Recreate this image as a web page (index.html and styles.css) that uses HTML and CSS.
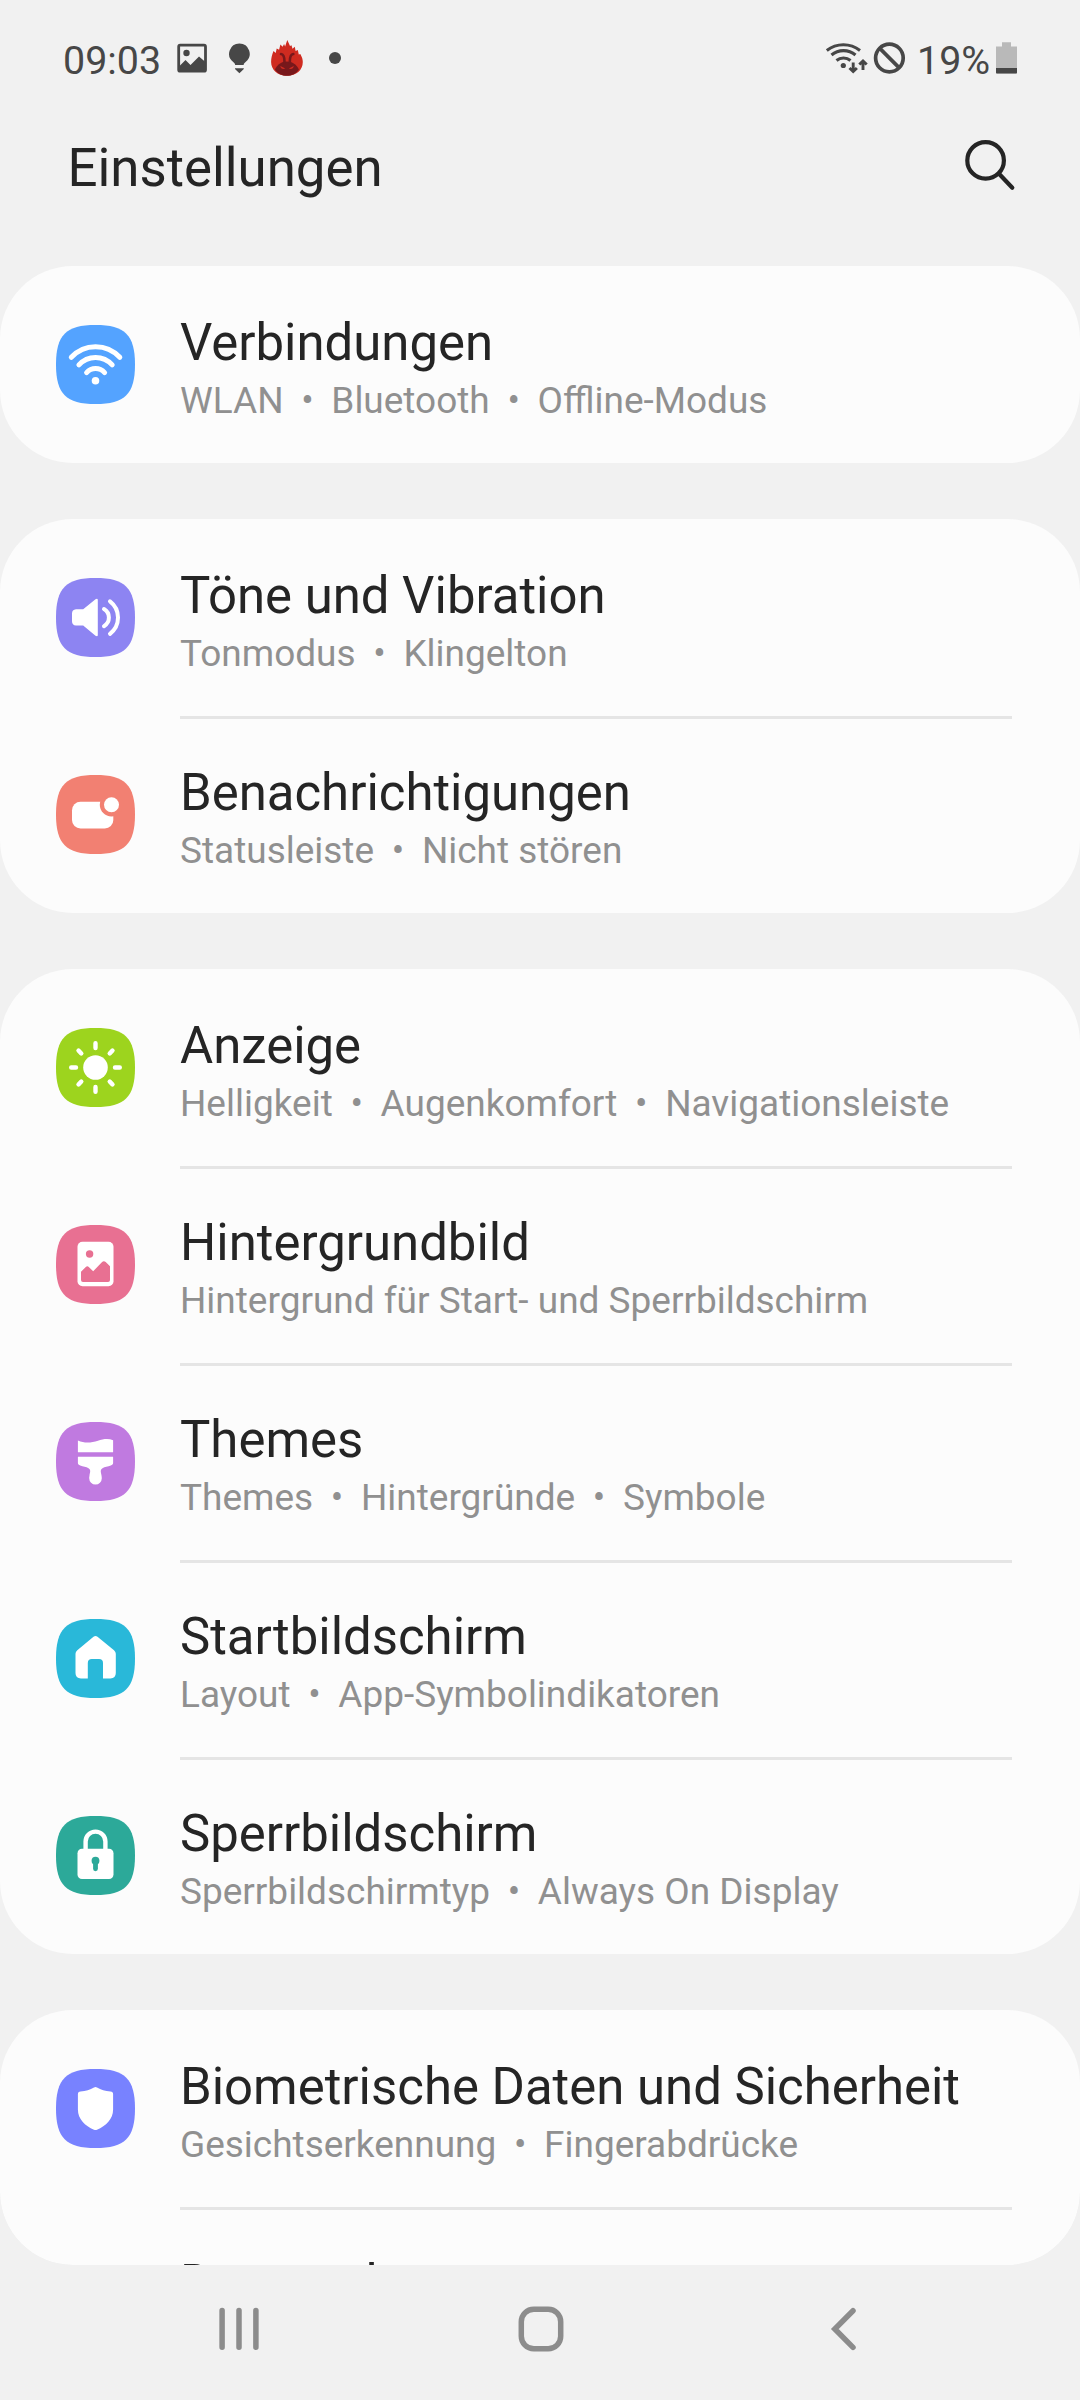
FILE: index.html
```html
<!DOCTYPE html>
<html lang="de">
<head>
<meta charset="utf-8">
<title>Einstellungen</title>
<link rel="stylesheet" href="styles.css">
</head>
<body>
<svg class="defs" width="0" height="0" aria-hidden="true">
  <symbol id="tile" viewBox="0 0 79 79"><path d="M0 39.5C0 10 10 0 39.5 0S79 10 79 39.5 69 79 39.5 79 0 69 0 39.5Z"/></symbol>
</svg>
<div class="screen">
  <div class="status">
    <span class="time">09:03</span>
    <svg class="s-image" width="30" height="56" viewBox="177 30 30 56"><rect x="178.7" y="45.2" width="26.8" height="26" rx="1.5" fill="none" stroke="#474747" stroke-width="2.8"/><circle cx="186.5" cy="53" r="3.2" fill="#474747"/><path d="M179 66.5L185.500 60L190.500 65L199 56.500L206 62.500V72H179Z" fill="#474747"/></svg>
    <svg class="s-bulb" width="22" height="56" viewBox="229 30 22 56" fill="#474747"><path d="M239.400 43.500a10.300 10.300 0 0 1 6.200 18.500c-1.800 1.400-1.900 2-1.900 3h-8.600c0-1-.1-1.600-1.900-3a10.300 10.300 0 0 1 6.200-18.500ZM235 68.200h8.800v.8l-2.300 2.200-2.100 2-2.100-2-2.300-2.200Z"/></svg>
    <svg class="s-flame" width="32" height="56" viewBox="270.500 30 32 56"><path d="M273 51l2.200 2 1-4.500 2.400 1.200 1.300-5.200 2.200 2.300 1.500-2.800 1 2.500 2.200-6.500 2.700 6 1.500-.8 1 3.500 2.300-2 .8 4.200 2.200-1 1 4.500 1.500-.5C301.500 57 302.300 59 302.300 62c0 8-6.500 13.800-15.900 13.800S270.600 69.500 270.600 62c0-4 .9-7 2.400-11Z" fill="#cf2b20"/><path d="M274.400 69.500c2.300-5 6.500-8 12-8s9.800 3 12 8c-2.600 4-7 6.300-12 6.300s-9.400-2.300-12-6.300Z" fill="#78181b"/><path d="M284 62c0-5-.8-7.800-3.500-8M289.300 62c0-5 .8-7.800 3.500-8" fill="none" stroke="#78181b" stroke-width="2.600" stroke-linecap="round"/><path d="M279.800 66l5 2.600c-2.500 1-4.600.2-5-2.600ZM293.300 66l-5 2.600c2.500 1 4.600.2 5-2.600Z" fill="#cf2b20"/></svg>
    <svg class="s-dot" width="12" height="56" viewBox="329 30 12 56"><circle cx="335" cy="58" r="6" fill="#474747"/></svg>
    <svg class="s-net" width="82" height="56" viewBox="825 30 82 56" fill="none" stroke="#474747"><path d="M826.800 50.500a27 27 0 0 1 33.200 0M831.500 55a18.500 18.500 0 0 1 24 0M836.500 60.500a11 11 0 0 1 14 0" stroke-width="3.100"/><circle cx="843.300" cy="65.500" r="2.600" fill="#474747" stroke="none"/><path d="M853.200 62.500v9M849.500 68l3.700 3.600 3.700-3.600M863 70v-9M859.300 64.500l3.700-3.600 3.700 3.600" stroke-width="2.900"/><circle cx="889.400" cy="58" r="13.800" stroke-width="3.700"/><path d="M879.800 48.400l19.200 19.200" stroke-width="3.700"/></svg>
    <span class="percent">19%</span>
    <svg class="s-batt" width="21" height="56" viewBox="996 30 21 56"><path d="M1002 42.300h9v4.200h6V73.500H996V46.500h6Z" fill="#b9b9b9"/><path d="M996 68h21v4.500q0 1-1 1H997q-1 0-1-1Z" fill="#474747"/></svg>
  </div>

  <header class="header">
    <h1 class="heading">Einstellungen</h1>
    <svg width="60" height="60" viewBox="960 138 60 60" fill="none" stroke="#252525" stroke-width="4.200" stroke-linecap="round"><circle cx="985.600" cy="160.400" r="18.300"/><path d="M999 173.800l13.300 14"/></svg>
  </header>

  <main class="list">
    <section class="card">
      <div class="row">
        <svg class="icon blue" viewBox="0 0 79 79"><use href="#tile"/><g fill="none" stroke="#fff" stroke-width="5" stroke-linecap="round"><path d="M15.300 32.300a33 33 0 0 1 48.500 0M22.900 39.900a22.300 22.300 0 0 1 33.300 0M30.600 47.600a12.100 12.100 0 0 1 18 0"/></g><circle cx="39.500" cy="55.800" r="3.800" fill="#fff"/></svg>
        <div class="text"><h2 class="title">Verbindungen</h2><p class="sub">WLAN<span class="sep">•</span>Bluetooth<span class="sep">•</span>Offline-Modus</p></div>
      </div>
    </section>

    <section class="card">
      <div class="row">
        <svg class="icon violet" viewBox="0 0 79 79"><use href="#tile"/><path d="M20 31.300h7.200L39.500 21.300q2.300-1.200 2.300.8v34.800q0 2-2.300.8L27.200 47.500H20q-4-.3-4-4.300v-7.600q0-4 4-4.300Z" fill="#fff"/><path d="M48 31a10 10 0 0 1 0 17.200M54 23.300a20.500 20.500 0 0 1 0 32.500" fill="none" stroke="#fff" stroke-width="4" stroke-linecap="round"/></svg>
        <div class="text"><h2 class="title">Töne und Vibration</h2><p class="sub">Tonmodus<span class="sep">•</span>Klingelton</p></div>
      </div>
      <div class="row">
        <svg class="icon coral" viewBox="0 0 79 79"><use href="#tile"/><rect x="16" y="26.700" width="41.300" height="26.700" rx="8.500" fill="#fff"/><circle cx="55.500" cy="29.700" r="11.700"/><circle cx="55.500" cy="29.700" r="7.500" fill="#fff"/></svg>
        <div class="text"><h2 class="title">Benachrichtigungen</h2><p class="sub">Statusleiste<span class="sep">•</span>Nicht stören</p></div>
      </div>
    </section>

    <section class="card">
      <div class="row">
        <svg class="icon green" viewBox="0 0 79 79"><use href="#tile"/><circle cx="39.500" cy="39.500" r="12.300" fill="#fff"/><path d="M39.500 15.200v4.800M39.500 59v4.800M15.200 39.500H20M59 39.500h4.800M22.500 22.500l2.800 3M56.500 22.500l-2.800 3M22.500 56.500l2.800-3M56.500 56.500l-2.800-3" stroke="#fff" stroke-width="4.400" stroke-linecap="round"/></svg>
        <div class="text"><h2 class="title">Anzeige</h2><p class="sub">Helligkeit<span class="sep">•</span>Augenkomfort<span class="sep">•</span>Navigationsleiste</p></div>
      </div>
      <div class="row">
        <svg class="icon pink" viewBox="0 0 79 79"><use href="#tile"/><rect x="21.500" y="16.800" width="36" height="44.500" rx="5" fill="#fff"/><circle cx="33.600" cy="29" r="3.700"/><path d="M25 46.700l4.800-4.700q1.500-1.300 3 0l4.400 4.300 8.900-9.300q1.800-1.700 3.600 0l4.300 4.200V55q0 2-2 2H27q-2 0-2-2Z"/></svg>
        <div class="text"><h2 class="title">Hintergrundbild</h2><p class="sub">Hintergrund für Start- und Sperrbildschirm</p></div>
      </div>
      <div class="row">
        <svg class="icon purple" viewBox="0 0 79 79"><use href="#tile"/><path d="M21.900 18.500c7 3.200 13.500 2.300 20.100.2 5-1.600 10.500-2.400 15.100-.4v12H21.900ZM21.900 34.800h35.200V41c0 1.400-1 2-2.300 2.500-3 1-6 1.300-8.300 2.700-3 2-1.200 4.500-1 7.300.2 1.400.3 2 .3 2.700a6.300 6.300 0 0 1-12.600 0c0-.700.100-1.300.3-2.700.2-2.800 2-5.300-1-7.300-2.300-1.400-5.300-1.700-8.300-2.700-1.300-.5-2.300-1.100-2.300-2.500Z" fill="#fff"/></svg>
        <div class="text"><h2 class="title">Themes</h2><p class="sub">Themes<span class="sep">•</span>Hintergründe<span class="sep">•</span>Symbole</p></div>
      </div>
      <div class="row">
        <svg class="icon cyan" viewBox="0 0 79 79"><use href="#tile"/><path d="M37.500 17.700q2-1.500 4 0L58 31.200q1.800 1.500 1.800 3.500V54q0 5.400-5.400 5.400H47V44q0-4-4-4h-7.200q-4 0-4 4v15.400h-6.900q-5.400 0-5.400-5.400V34.700q0-2 1.800-3.500Z" fill="#fff"/></svg>
        <div class="text"><h2 class="title">Startbildschirm</h2><p class="sub">Layout<span class="sep">•</span>App-Symbolindikatoren</p></div>
      </div>
      <div class="row">
        <svg class="icon teal" viewBox="0 0 79 79"><use href="#tile"/><path d="M29.600 35V25.500a9.900 9.900 0 0 1 19.800 0V35" fill="none" stroke="#fff" stroke-width="4.400"/><rect x="21.500" y="32.800" width="36" height="30.200" rx="4.500" fill="#fff"/><circle cx="39.500" cy="44.700" r="3.900"/><path d="M39.500 46v6.800" stroke="#2ca999" stroke-width="4.800" stroke-linecap="round"/></svg>
        <div class="text"><h2 class="title">Sperrbildschirm</h2><p class="sub">Sperrbildschirmtyp<span class="sep">•</span>Always On Display</p></div>
      </div>
    </section>

    <section class="card">
      <div class="row">
        <svg class="icon indigo" viewBox="0 0 79 79"><use href="#tile"/><path d="M38 18.500q1.500-.8 3 0c4 2.300 8 3.500 13.500 4 1.700.2 2.600 1 2.600 2.500v15.500C57.100 50 50 57 41 60.800q-1.500.6-3 0C29 57 21.900 50 21.900 40.500V25c0-1.500.9-2.300 2.600-2.500 5.500-.5 9.500-1.700 13.500-4Z" fill="#fff"/></svg>
        <div class="text"><h2 class="title">Biometrische Daten und Sicherheit</h2><p class="sub">Gesichtserkennung<span class="sep">•</span>Fingerabdrücke</p></div>
      </div>
      <div class="row cut">
        <div class="text"><h2 class="title">Datenschutz</h2></div>
      </div>
    </section>
  </main>

  <nav class="nav">
    <svg width="1080" height="135" viewBox="0 2265 1080 135" fill="none" stroke="#8c8c8c" stroke-width="5.500" stroke-linecap="round"><path d="M222.100 2310.500v36.800M239 2310.500v36.800M255.900 2310.500v36.800"/><rect x="521.300" y="2309.200" width="39.400" height="39.600" rx="12.500"/><path d="M853 2310.700L834.800 2329L853 2347.400"/></svg>
  </nav>
</div>
</body>
</html>
```
FILE: styles.css
```css
* { box-sizing: border-box; }
body, h1, h2, p { margin: 0; font-weight: 400; }
body { background: #f1f1f1; font-family: Roboto, "Liberation Sans", sans-serif; color: #252525; }
svg { display: block; flex: none; }
.defs { position: absolute; }
.screen { width: 1080px; height: 2400px; display: flex; flex-direction: column; overflow: hidden; }

.status { height: 116px; flex: none; display: flex; align-items: center; padding: 0 63px; font-size: 39.4px; color: #474747; }
.time { width: 114px; padding-top: 4px; }
.s-bulb { margin-left: 22px; }
.s-flame { margin-left: 20px; }
.s-dot { margin-left: 26px; }
.s-net { margin-left: auto; }
.percent { width: 79px; margin-left: 10px; padding-top: 4px; }

.header { height: 104px; flex: none; display: flex; align-items: center; justify-content: space-between; padding: 0 60px 0 67.4px; margin-bottom: 46px; }
.heading { font-size: 52.8px; line-height: 62px; }

.list { flex: 1; min-height: 0; display: flex; flex-direction: column; gap: 56px; overflow: hidden; border-radius: 0 0 73px 73px; }
.card { flex: none; background: #fcfcfc; border-radius: 73px; overflow: hidden; }
.card:last-child { flex: 1; min-height: 0; }
.row { height: 197px; display: flex; padding: 0 68px 0 56px; }
.icon { width: 79px; height: 79px; margin: 59px 45px 0 0; }
.text { flex: 1; padding-top: 47px; white-space: nowrap; }
.row + .row .text { border-top: 3px solid #e5e5e5; padding-top: 44px; }
.row.cut { padding-left: 180px; }
.title { font-size: 50.9px; line-height: 60px; }
.sub { margin-top: 6px; font-size: 36.98px; line-height: 43px; color: #909090; }
.sep { display: inline-block; width: 47.8px; text-align: center; }

.blue { fill: #54a3ff; }
.violet { fill: #8d84f2; }
.coral { fill: #f28072; }
.green { fill: #9dd41e; }
.pink { fill: #e87092; }
.purple { fill: #c07ae0; }
.cyan { fill: #29b8d9; }
.teal { fill: #2ca999; }
.indigo { fill: #7882ff; }

.nav { height: 135px; flex: none; }
```
